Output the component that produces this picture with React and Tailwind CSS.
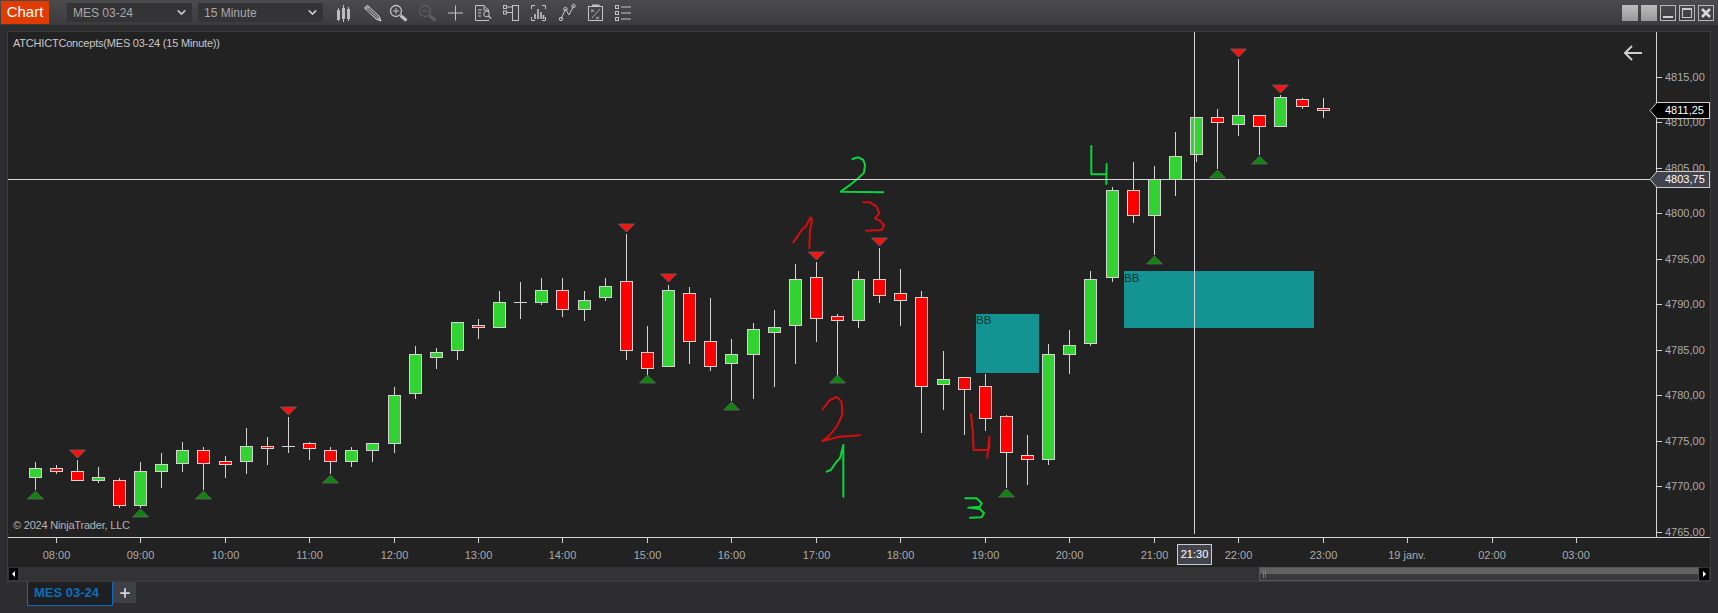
import { ChevronDown, Plus } from 'lucide-react'

// wick x of every bar, left to right
const XS = [35, 56, 77, 98, 119, 140, 161, 182, 203, 225, 246, 267, 288, 309, 330, 351, 372, 394, 415, 436, 457, 478, 499, 520, 541, 562, 584, 605, 626, 647, 668, 689, 710, 731, 753, 774, 795, 816, 837, 858, 879, 900, 921, 943, 964, 985, 1006, 1027, 1048, 1069, 1090, 1112, 1133, 1154, 1175, 1196, 1217, 1238, 1259, 1280, 1302, 1323]

// [color, wick top, wick bottom, body top, body bottom]
const BARS = [
  ['g', 462, 490, 468, 478], ['r', 465, 474, 468, 472], ['r', 460, 481, 471, 481], ['g', 467, 483, 477, 481],
  ['r', 478, 508, 480, 506], ['g', 462, 508, 471, 506], ['g', 453, 488, 464, 472], ['g', 442, 472, 450, 464],
  ['r', 447, 490, 450, 464], ['r', 456, 478, 461, 465], ['g', 428, 474, 446, 462], ['r', 437, 465, 446, 449],
  ['d', 417, 453, 446, 446], ['r', 442, 460, 443, 449], ['r', 447, 474, 450, 462], ['g', 447, 467, 450, 462],
  ['g', 443, 462, 443, 451], ['g', 387, 453, 395, 444], ['g', 346, 399, 354, 394], ['g', 348, 369, 352, 358],
  ['g', 322, 360, 322, 351], ['r', 319, 339, 325, 328], ['g', 291, 327, 302, 328], ['d', 282, 319, 302, 302],
  ['g', 278, 305, 290, 303], ['r', 278, 317, 290, 310], ['g', 291, 321, 300, 310], ['g', 278, 301, 286, 298],
  ['r', 234, 360, 281, 351], ['r', 326, 375, 352, 369], ['g', 285, 366, 290, 367], ['r', 287, 364, 293, 342],
  ['r', 298, 371, 341, 367], ['g', 339, 401, 354, 364], ['g', 323, 399, 329, 355], ['g', 310, 387, 327, 333],
  ['g', 264, 364, 279, 326], ['r', 262, 342, 277, 319], ['r', 314, 375, 316, 321], ['g', 271, 328, 279, 321],
  ['r', 248, 303, 279, 296], ['r', 269, 326, 293, 301], ['r', 291, 433, 297, 387], ['g', 351, 410, 379, 385],
  ['r', 377, 435, 377, 390], ['r', 374, 431, 386, 419], ['r', 415, 488, 416, 453], ['r', 435, 485, 455, 460],
  ['g', 344, 465, 354, 460], ['g', 330, 374, 345, 355], ['g', 271, 346, 279, 344], ['g', 187, 282, 190, 278],
  ['r', 162, 223, 190, 216], ['g', 166, 255, 179, 216], ['g', 132, 196, 156, 180], ['g', 117, 162, 117, 155],
  ['r', 109, 169, 117, 123], ['g', 59, 136, 115, 125], ['r', 115, 155, 115, 127], ['g', 95, 126, 97, 127],
  ['r', 98, 109, 99, 107], ['r', 98, 118, 108, 111],
]

// bar index, top y of the triangle
const UPS = [[0, 491], [5, 509], [8, 491], [14, 475], [29, 375], [33, 402], [38, 375], [46, 489], [53, 256], [56, 170], [58, 156]]
const DOWNS = [[2, 450], [12, 407], [28, 224], [30, 274], [37, 252], [40, 238], [57, 49], [59, 85]]

const PRICES = ['4815,00', '4810,00', '4805,00', '4800,00', '4795,00', '4790,00', '4785,00', '4780,00', '4775,00', '4770,00', '4765,00']

const TIMES = [
  ['08:00', 1], ['09:00', 5], ['10:00', 9], ['11:00', 13], ['12:00', 17], ['13:00', 21], ['14:00', 25], ['15:00', 29],
  ['16:00', 33], ['17:00', 37], ['18:00', 41], ['19:00', 45], ['20:00', 49], ['21:00', 53], ['22:00', 57], ['23:00', 61],
]
const TIMES_AFTER = [['19 janv.', 1407], ['02:00', 1492], ['03:00', 1576]]

const RED_MARKS = [
  'M40 307L50 293L65 270L78 258L92 232L96 240L90 270L88 325',
  'M250 187L270 187L290 200L298 220L285 235L300 243L312 255L305 270L258 272',
  'M128 808L150 780L170 771L185 785L187 825L170 860L145 890L127 903L180 890L240 886',
  'M573 823L578 870L581 930L620 930L628 925L628 890L622 953',
]
const GREEN_MARKS = [
  'M217 57L235 52L250 60L255 75L252 98L235 115L210 135L182 155L310 157',
  'M140 995L152 990L170 965L180 955L190 915L190 1070',
  'M556 1075L590 1075L605 1090L600 1100L565 1103L600 1107L612 1120L605 1132L570 1133',
  'M934 18L934 103L975 103M980 72L979 132',
]

function Bar({ x, bar }) {
  const [kind, wt, wb, bt, bb] = bar
  return (
    <g>
      <rect x={x} y={wt} width="1" height={wb - wt} fill="#d4d4d4" />
      {kind === 'd' ? (
        <rect x={x - 6} y={bt} width="13" height="1" fill="#d4d4d4" />
      ) : (
        <rect x={x - 5.5} y={bt + 0.5} width="12" height={bb - bt - 1} fill={kind === 'g' ? '#32d232' : '#ff0000'} stroke="#d4d4d4" />
      )}
    </g>
  )
}

function Plot() {
  return (
    <svg viewBox="8 32 1648 505" width="1648" height="505" className="block">
      <g shapeRendering="crispEdges">
        <rect x="976" y="314" width="63" height="59" fill="#149393" />
        <rect x="1124" y="271" width="190" height="57" fill="#149393" />
        {BARS.map((b, i) => <Bar key={i} x={XS[i]} bar={b} />)}
      </g>
      <text x="976" y="324" fontSize="11.5" fill="#033333">BB</text>
      <text x="1124" y="282" fontSize="11.5" fill="#033333">BB</text>
      {UPS.map(([i, y]) => (
        <polygon key={i} points={`${XS[i] + 0.5},${y} ${XS[i] - 7.5},${y + 8} ${XS[i] + 8.5},${y + 8}`} fill="#0c860c" stroke="#666666" strokeWidth="0.8" />
      ))}
      {DOWNS.map(([i, y]) => (
        <polygon key={i} points={`${XS[i] + 0.5},${y + 8} ${XS[i] - 7.5},${y} ${XS[i] + 8.5},${y}`} fill="#ff1010" stroke="#666666" strokeWidth="0.8" />
      ))}
      <g transform="translate(780 140) scale(0.3333)" fill="none" strokeWidth="6" strokeLinejoin="round" strokeLinecap="round">
        {RED_MARKS.map(d => <path key={d} d={d} stroke="#d40f0f" />)}
        {GREEN_MARKS.map(d => <path key={d} d={d} stroke="#0ad63c" />)}
      </g>
      <g shapeRendering="crispEdges" fill="#d4d4d4">
        <rect x="8" y="179" width="1648" height="1" />
        <rect x="1194" y="32" width="1" height="502" />
      </g>
      <path d="M1642 53H1625M1632 46L1625 53L1632 60" fill="none" stroke="#cfcfcf" strokeWidth="2" />
    </svg>
  )
}

function PriceFlag({ top, className, children }) {
  return (
    <div className="absolute left-[-8px] flex h-[17px] w-[61px]" style={{ top }}>
      <svg width="8" height="17" viewBox="0 0 8 17" className={className.includes('bg-black') ? 'text-black' : 'text-[#43434d]'}>
        <path d="M8 .5L1 8.5L8 16.5" fill="currentColor" stroke="#cccccc" />
      </svg>
      <div className={`flex-1 border border-l-0 border-[#cccccc] pl-[8px] text-[11px] leading-[15px] text-white ${className}`}>{children}</div>
    </div>
  )
}

function PriceAxis() {
  return (
    <div className="relative w-[53px] border-l border-[#d4d4d4]">
      {PRICES.map((p, i) => (
        <div key={p} className="absolute left-0 flex h-[14px] items-center" style={{ top: 38 + i * 45.5 }}>
          <span className="h-px w-[5px] bg-[#d4d4d4]" />
          <span className="ml-[3px] text-[11px] text-[#ababab]">{p}</span>
        </div>
      ))}
      <PriceFlag top={70} className="bg-black">4811,25</PriceFlag>
      <PriceFlag top={139} className="bg-[#43434d]">4803,75</PriceFlag>
    </div>
  )
}

function TimeLabel({ x, children }) {
  return (
    <div className="absolute top-0 flex w-[60px] flex-col items-center" style={{ left: x - 30 }}>
      <span className="h-[5px] w-px bg-[#d4d4d4]" />
      <span className="mt-[5px] text-[11px] leading-[14px] text-[#ababab]">{children}</span>
    </div>
  )
}

function TimeAxis() {
  return (
    <div className="relative h-[30px] border-t border-[#d4d4d4]">
      <div className="absolute left-[-8px] top-0 h-full w-full">
        {TIMES.map(([t, i]) => <TimeLabel key={t} x={XS[i] + 0.5}>{t}</TimeLabel>)}
        {TIMES_AFTER.map(([t, x]) => <TimeLabel key={t} x={x}>{t}</TimeLabel>)}
        <div className="absolute left-[1177px] top-[6px] flex h-[21px] w-[35px] items-center justify-center border border-[#cccccc] bg-[#43434d] text-[11px] text-white">21:30</div>
      </div>
    </div>
  )
}

function ScrollBar() {
  return (
    <div className="flex h-[14px] items-center bg-[#333335] pl-px">
      <div className="flex h-[12px] w-[9px] items-center justify-center bg-black">
        <span className="h-0 w-0 border-y-[3px] border-r-[3px] border-y-transparent border-r-white" />
      </div>
      <div className="ml-[1241px] flex h-[14px] w-[440px] items-center border border-[#555557] bg-linear-to-b from-[#626262] from-50% to-[#3a3a3c] to-50% pl-[3px]">
        <span className="h-[8px] w-[3px] border-x border-[#777777]" />
      </div>
      <div className="flex h-[12px] w-[10px] items-center justify-center bg-black">
        <span className="h-0 w-0 border-y-[3px] border-l-[3px] border-y-transparent border-l-white" />
      </div>
    </div>
  )
}

function Icon({ center, children }) {
  return (
    <svg viewBox={`${center - 14} 0 28 25`} width="28" height="25" fill="none" stroke="#c4c4c4" className="shrink-0">
      {children}
    </svg>
  )
}

function Combo({ className, children }) {
  return (
    <div className={`mt-[3px] flex h-[19px] items-center justify-between bg-[#343437] pl-[6px] pr-[4px] text-[12px] text-[#a8a8a8] ${className}`}>
      <span>{children}</span>
      <ChevronDown size={13} strokeWidth={3} className="text-[#c8c8c8]" />
    </div>
  )
}

function Toolbar() {
  return (
    <div className="flex h-[25px] shrink-0 items-start bg-linear-to-b from-[#4b4b4d] to-[#3c3c3e] pl-px">
      <div className="mt-px flex h-[23px] w-[48px] items-center justify-center bg-[#e03c00] text-[15px] text-white">Chart</div>
      <Combo className="ml-[18px] w-[125px]">MES 03-24</Combo>
      <Combo className="ml-[6px] w-[125px]">15 Minute</Combo>
      <div className="ml-[6px] flex">
        <Icon center={343}>
          <g fill="#bdbdbd" stroke="none">
            <rect x="337" y="10" width="3" height="10" />
            <rect x="338" y="8" width="1" height="13" />
            <rect x="342" y="8" width="3" height="11" />
            <rect x="343" y="5" width="1" height="17" />
            <rect x="347" y="9" width="3" height="10" />
            <rect x="348" y="7" width="1" height="14" />
          </g>
        </Icon>
        <Icon center={370}>
          <path d="M363.5 8L366.5 5.5L378 16L380 21L375 19Z" fill="#8e8e8e" stroke="#d8d8d8" />
          <path d="M366 9.5L376 18.5M368 8L378 17" stroke="#4a4a4c" />
        </Icon>
        <Icon center={399}>
          <circle cx="396" cy="11" r="5.5" strokeWidth="1.3" />
          <path d="M393 11H399M396 8V14" />
          <path d="M400.5 15.5L406.5 20.5" strokeWidth="3" />
        </Icon>
        <Icon center={426}>
          <g stroke="#5e5e60">
            <circle cx="424" cy="11" r="5.5" strokeWidth="1.3" />
            <path d="M421 11H427" />
            <path d="M428.5 15.5L434.5 20.5" strokeWidth="3" />
          </g>
        </Icon>
        <Icon center={454}>
          <path d="M447 13H462M454.5 5.5V20.5" />
        </Icon>
        <Icon center={483}>
          <path d="M475.5 20.5V5.5H484L488.5 10V12M488.5 19.5V20.5H475.5M484 5.5V10H488.5M478 10H482M478 13H481M478 16H481" />
          <circle cx="486.5" cy="14" r="2.8" />
          <path d="M488.5 16L491 18.5" strokeWidth="1.5" />
        </Icon>
        <Icon center={511}>
          <rect x="503.5" y="5.5" width="3" height="3" />
          <rect x="503.5" y="11" width="3" height="3" />
          <rect x="512.5" y="5.5" width="6" height="15" />
          <path d="M506.5 7H512.5M506.5 12.5H512.5" />
        </Icon>
        <Icon center={539}>
          <path d="M531.5 9V5.5H535M542 5.5H545.5V9M545.5 17V20.5H542M535 20.5H531.5V17" />
          <path d="M535 19V14M538 19V9M541 19V12M543.5 19V15" strokeWidth="1.6" />
        </Icon>
        <Icon center={567}>
          <path d="M561 19L565.5 9L569 15L573.5 6" />
          <circle cx="561" cy="19" r="1.7" />
          <circle cx="565.5" cy="9" r="1.7" />
          <circle cx="573.5" cy="6" r="1.7" />
        </Icon>
        <Icon center={595}>
          <rect x="588.5" y="6.5" width="14" height="14" />
          <path d="M592 5.5H599.5" strokeWidth="2" />
          <path d="M591 9.5L594 12M594 9.5L591 12M596 17L599 19M599 16.5L596 19.5M592 18L600 9" strokeWidth=".8" />
        </Icon>
        <Icon center={623}>
          <rect x="615.5" y="5.5" width="3" height="3" />
          <rect x="615.5" y="11.5" width="3" height="3" />
          <rect x="615.5" y="17.5" width="3" height="3" />
          <path d="M621 7H631M621 13H631M621 19H631" />
        </Icon>
      </div>
      <div className="ml-auto mr-[4px] mt-[5px] flex gap-[3px]">
        <span className="h-[16px] w-[16px] bg-linear-to-b from-[#bdbdbd] to-[#989898]" />
        <span className="h-[16px] w-[16px] bg-linear-to-b from-[#bdbdbd] to-[#989898]" />
        <span className="flex h-[16px] w-[16px] items-end justify-center border border-[#b8b8b8] pb-[2px]">
          <span className="h-[2px] w-[10px] bg-[#d0d0d0]" />
        </span>
        <span className="flex h-[16px] w-[16px] border border-[#b8b8b8] p-[2px]">
          <span className="flex-1 border border-t-2 border-[#c8c8c8]" />
        </span>
        <span className="flex h-[16px] w-[16px] items-center justify-center border border-[#b8b8b8]">
          <svg width="12" height="12" viewBox="0 0 12 12" fill="none" stroke="#d8d8d8" strokeWidth="2.6">
            <path d="M2 2L10 10M10 2L2 10" />
          </svg>
        </span>
      </div>
    </div>
  )
}

export default function App() {
  return (
    <div className="flex h-[613px] w-[1718px] flex-col overflow-hidden bg-[#2d2d2f] font-['Liberation_Sans',Arial,sans-serif]">
      <Toolbar />
      <div className="mx-[7px] mt-[6px] flex h-[551px] shrink-0 flex-col border border-[#3c3c3e] bg-[#222222]">
        <div className="flex h-[505px]">
          <div className="relative w-[1648px]">
            <Plot />
            <div className="absolute left-[5px] top-[4px] text-[11px] leading-[14px] tracking-[-0.2px] text-[#c8c8c8]">ATCHICTConcepts(MES 03-24 (15 Minute))</div>
            <div className="absolute bottom-[5px] left-[5px] text-[11px] leading-[14px] tracking-[-0.2px] text-[#b4b4b4]">© 2024 NinjaTrader, LLC</div>
          </div>
          <PriceAxis />
        </div>
        <TimeAxis />
        <ScrollBar />
      </div>
      <div className="flex items-start pl-[27px]">
        <div className="flex h-[24px] w-[86px] items-center border border-t-0 border-[#0a6ebd] bg-[#1f1f21] pb-[2px] pl-[6px] text-[13px] font-bold text-[#0a6ebd]">MES 03-24</div>
        <div className="flex h-[21px] w-[23px] items-center justify-center bg-[#3f3f46]">
          <Plus size={14} strokeWidth={3} className="text-[#d8d8d8]" />
        </div>
      </div>
    </div>
  )
}
